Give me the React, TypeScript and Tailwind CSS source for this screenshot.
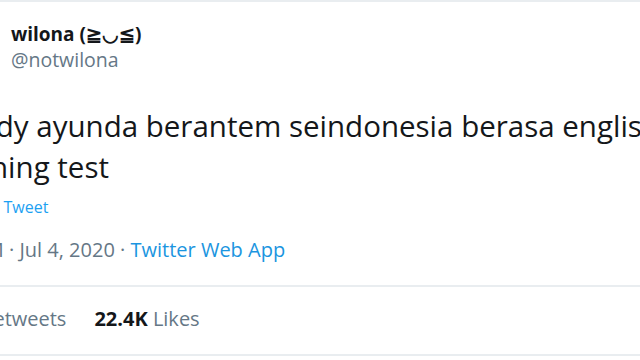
export default function App() {
  return (
    <div className="w-[640px] h-[360px] overflow-hidden bg-white" style={{ fontFamily: "'Open Sans', 'Noto Sans', sans-serif" }}>
      <div className="-ml-[66px] w-[770px] border-t-2 border-[#e9edf0]">
        <div className="flex items-center gap-[12px] pt-[13px]">
          <div className="w-[65px] h-[65px] rounded-full bg-[#c9b8a8] shrink-0" />
          <div className="flex flex-col">
            <span className="text-[19px] leading-[25px] font-bold text-[#14171a]">wilona (≧◡≦)</span>
            <span className="text-[19.5px] leading-[26px] text-[#657786]">@notwilona</span>
          </div>
        </div>
        <p className="mt-[25px] text-[29.5px] leading-[41px] text-[#14171a]">
          maudy ayunda berantem seindonesia berasa english listening test
        </p>
        <div className="mt-[9px] -ml-[4px] text-[16px] leading-[22px] text-[#1da1f2]">Translate Tweet</div>
        <div className="mt-[19px] -ml-[5px] text-[20px] leading-[26px] text-[#657786]">
          2:19 PM · Jul 4, 2020 · <span className="text-[#1b95e0]">Twitter Web App</span>
        </div>
        <div className="mt-[22px] border-t-2 border-[#e9edf0]" />
        <div className="flex gap-[28px] pt-[19px] pb-[22px] text-[20px] leading-[26px] text-[#657786]">
          <span><span className="font-bold text-[#14171a]">3.8K</span> Retweets</span>
          <span><span className="font-bold text-[#14171a]">22.4K</span> Likes</span>
        </div>
        <div className="border-t-2 border-[#e9edf0]" />
      </div>
    </div>
  );
}
